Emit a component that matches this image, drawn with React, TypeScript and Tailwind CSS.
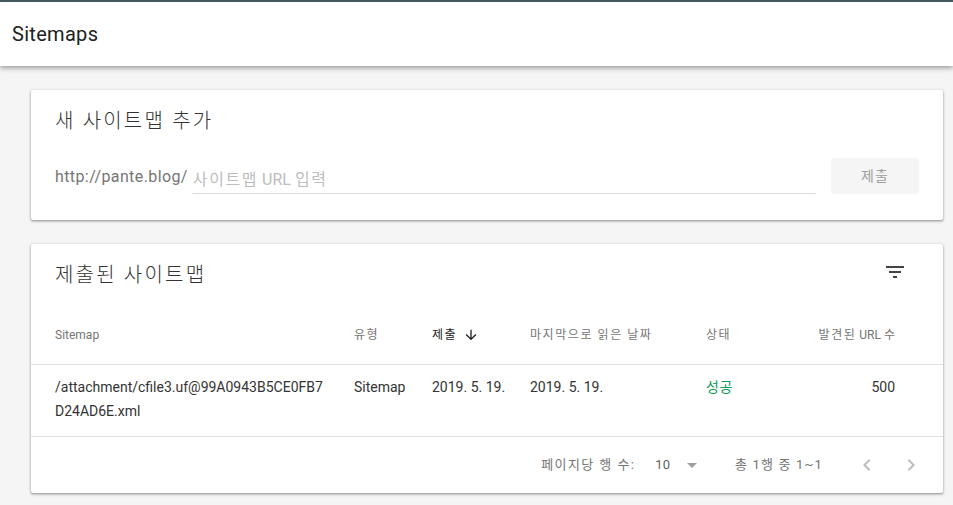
import React from "react";

const font = { fontFamily: 'Roboto, "Noto Sans CJK KR", sans-serif' };

export default function App() {
  return (
    <div className="min-h-[505px] w-[953px] bg-[#f5f5f5] text-[#212121]" style={font}>
      <div className="h-[2px] bg-[#455a64]" />
      <header className="relative z-10 flex h-[64px] items-center bg-white px-3 shadow-[0_2px_4px_rgba(0,0,0,0.28),0_4px_6px_rgba(0,0,0,0.08)]">
        <h1 className="text-[20px] font-normal tracking-[0.3px] text-[#212121]">Sitemaps</h1>
      </header>

      <main className="flex flex-col gap-6 pl-[31px] pr-[10px] pt-6">
        {/* Card 1 */}
        <section className="flex h-[130px] flex-col rounded-[2px] bg-white shadow-[0_1px_2px_rgba(0,0,0,0.3),0_1px_3px_1px_rgba(0,0,0,0.12)]">
          <div className="flex h-[62px] items-center px-6">
            <h2 className="text-[20px] font-light tracking-[0.11em] text-[#333]">새 사이트맵 추가</h2>
          </div>
          <div className="flex items-center pl-6 pr-6 pt-[2px]">
            <span className="pt-[6px] text-[16px] tracking-[0.4px] text-[#757575]">http://pante.blog/</span>
            <div className="ml-[5px] mr-4 flex h-[39px] flex-1 items-end border-b border-[#dadce0] pb-[1px]">
              <span className="text-[16px] text-[#bdbdbd]">
                <span className="tracking-[0.1em]">사이트맵</span> URL <span className="tracking-[0.1em]">입력</span>
              </span>
            </div>
            <button className="mt-1 flex h-[36px] w-[88px] items-center justify-center rounded-[3px] bg-[#f5f5f5] text-[14px] tracking-[0.08em] text-[#9e9e9e]">
              제출
            </button>
          </div>
        </section>

        {/* Card 2 */}
        <section className="flex flex-col rounded-[2px] bg-white shadow-[0_1px_2px_rgba(0,0,0,0.3),0_1px_3px_1px_rgba(0,0,0,0.12)]">
          <div className="flex h-[61px] items-center justify-between pl-6 pr-9">
            <h2 className="text-[20px] font-light tracking-[0.11em] text-[#333]">제출된 사이트맵</h2>
            <svg width="24" height="24" viewBox="0 0 24 24" className="mt-[-6px] fill-[#424242]">
              <path d="M10 18h4v-2h-4v2zM3 6v2h18V6H3zm3 7h12v-2H6v2z" />
            </svg>
          </div>

          <div className="flex h-[60px] items-center border-b border-[#e0e0e0] pl-6 pr-12 text-[12px] text-[#757575]">
            <div className="w-[299px]">Sitemap</div>
            <div className="w-[78px] tracking-[0.12em]">유형</div>
            <div className="flex w-[98px] items-center gap-[6px] text-[#212121]">
              <span className="tracking-[0.12em]">제출</span>
              <svg width="16" height="16" viewBox="0 0 24 24" className="fill-[#212121]">
                <path d="M20 12l-1.41-1.41L13 16.17V4h-2v12.17l-5.58-5.59L4 12l8 8 8-8z" />
              </svg>
            </div>
            <div className="w-[176px] tracking-[0.13em]">마지막으로 읽은 날짜</div>
            <div className="w-[80px] tracking-[0.12em]">상태</div>
            <div className="flex-1 text-right">
              <span className="tracking-[0.13em]">발견된</span> URL <span>수</span>
            </div>
          </div>

          <div className="flex h-[72px] items-start border-b border-[#e0e0e0] pl-6 pr-12 pt-[10px] text-[14px] leading-6 text-[#333]">
            <div className="w-[299px] break-all pr-2">
              /attachment/cfile3.uf@99A0943B5CE0FB7
              <br />
              D24AD6E.xml
            </div>
            <div className="w-[78px]">Sitemap</div>
            <div className="w-[98px]">2019. 5. 19.</div>
            <div className="w-[176px]">2019. 5. 19.</div>
            <div className="w-[80px] tracking-[0.05em] text-[#0f9d58]">성공</div>
            <div className="flex-1 text-right">500</div>
          </div>

          <div className="flex h-[56px] items-center justify-end pr-[20px] text-[13px] text-[#757575]">
            <span className="tracking-[0.11em]">페이지당 행 수:</span>
            <span className="ml-5 text-[#616161]">10</span>
            <svg width="24" height="24" viewBox="0 0 24 24" className="ml-[10px] fill-[#9e9e9e]">
              <path d="M7 10l5 5 5-5z" />
            </svg>
            <span className="ml-[31px] tracking-[0.09em]">총 1행 중 1~1</span>
            <svg width="24" height="24" viewBox="0 0 24 24" className="ml-[32px] fill-[#bdbdbd]">
              <path d="M15.41 7.41L14 6l-6 6 6 6 1.41-1.41L10.83 12z" />
            </svg>
            <svg width="24" height="24" viewBox="0 0 24 24" className="ml-[20px] fill-[#bdbdbd]">
              <path d="M10 6L8.59 7.41 13.17 12l-4.58 4.59L10 18l6-6z" />
            </svg>
          </div>
        </section>
      </main>
    </div>
  );
}
